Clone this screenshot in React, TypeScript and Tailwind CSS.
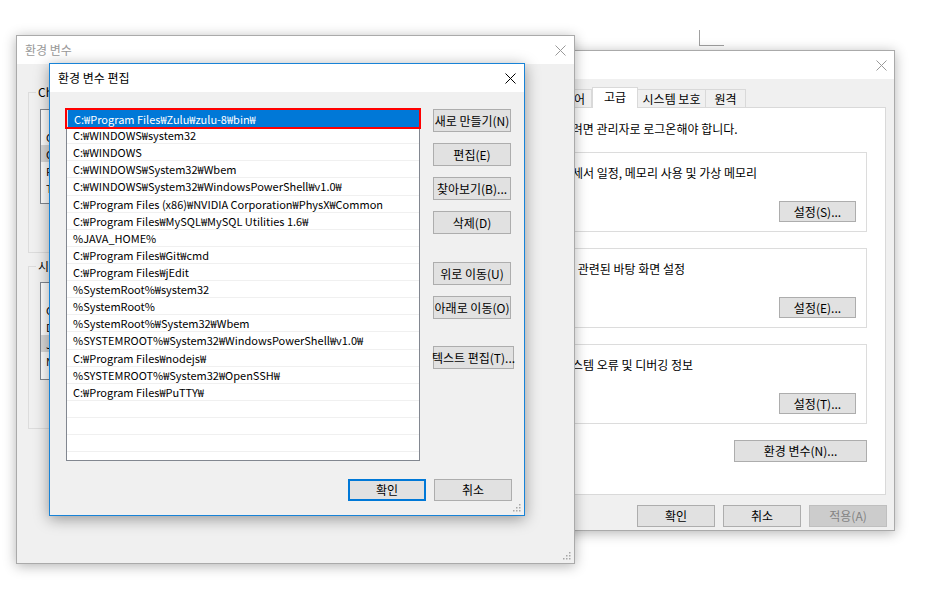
import React from "react";

const FONT = "font-['Noto_Sans_CJK_KR','Noto_Sans',sans-serif]";

const paths = [
  "C:₩Program Files₩Zulu₩zulu-8₩bin₩",
  "C:₩WINDOWS₩system32",
  "C:₩WINDOWS",
  "C:₩WINDOWS₩System32₩Wbem",
  "C:₩WINDOWS₩System32₩WindowsPowerShell₩v1.0₩",
  "C:₩Program Files (x86)₩NVIDIA Corporation₩PhysX₩Common",
  "C:₩Program Files₩MySQL₩MySQL Utilities 1.6₩",
  "%JAVA_HOME%",
  "C:₩Program Files₩Git₩cmd",
  "C:₩Program Files₩jEdit",
  "%SystemRoot%₩system32",
  "%SystemRoot%",
  "%SystemRoot%₩System32₩Wbem",
  "%SYSTEMROOT%₩System32₩WindowsPowerShell₩v1.0₩",
  "C:₩Program Files₩nodejs₩",
  "%SYSTEMROOT%₩System32₩OpenSSH₩",
  "C:₩Program Files₩PuTTY₩",
  "",
  "",
  "",
];

const CloseX = ({ color }: { color: string }) => (
  <svg width="11" height="11" viewBox="0 0 11 11">
    <path d="M0.5 0.5 L10.5 10.5 M10.5 0.5 L0.5 10.5" stroke={color} strokeWidth="1" />
  </svg>
);

// resize grip dots, bottom-right corner of a sizable window
const Grip = () => (
  <svg width="9" height="9" viewBox="0 0 9 9" className="absolute right-[3px] bottom-[3px]">
    {[
      [7, 1],
      [7, 4],
      [4, 4],
      [7, 7],
      [4, 7],
      [1, 7],
    ].map(([x, y], i) => (
      <rect key={i} x={x} y={y} width="1.5" height="1.5" fill="#a6a6a6" />
    ))}
  </svg>
);

type BtnProps = {
  label: string;
  w?: string;
  h?: string;
  primary?: boolean;
  disabled?: boolean;
  className?: string;
};

const Btn = ({ label, w = "w-[78px]", h = "h-[22px]", primary, disabled, className = "" }: BtnProps) => (
  <div
    className={`${w} ${h} ${className} flex shrink-0 items-center justify-center whitespace-nowrap text-[12px] leading-[16px] ${
      primary
        ? "border-2 border-[#0078d7] bg-[#e1e1e1] text-black"
        : disabled
        ? "border border-[#bfbfbf] bg-[#cccccc] text-[#838383]"
        : "border border-[#adadad] bg-[#e1e1e1] text-black"
    }`}
  >
    {label}
  </div>
);

const groups = [
  { title: "성능", desc: "시각 효과, 프로세서 일정, 메모리 사용 및 가상 메모리", btn: "설정(S)...", shift: "" },
  { title: "사용자 프로필", desc: "사용자 로그인에 관련된 바탕 화면 설정", btn: "설정(E)...", shift: "-ml-[2px]" },
  { title: "시작 및 복구", desc: "시스템 시작, 시스템 오류 및 디버깅 정보", btn: "설정(T)...", shift: "" },
];

const SystemProps = () => (
  <div className="absolute left-[455px] top-[50px] w-[440px] h-[481px] border border-[#aaaaaa] bg-[#f0f0f0] shadow-[0_2px_12px_rgba(0,0,0,0.3)] flex flex-col">
    <div className="h-[28px] bg-white flex items-center justify-between shrink-0">
      <span className="pl-[8px] text-[12px] text-[#999]">시스템 속성</span>
      <div className="w-[26px] flex justify-center">
        <CloseX color="#999" />
      </div>
    </div>
    <div className="flex flex-col pl-[9px] pr-[8px] pt-[7px]">
      <div className="flex items-end h-[21px]">
        <div className="w-[70px] h-[18px] border border-[#d9d9d9] border-b-0 flex items-center justify-center text-[12px]">컴퓨터 이름</div>
        <div className="w-[57px] h-[18px] border border-[#d9d9d9] border-b-0 border-l-0 flex items-center justify-center text-[12px]">하드웨어</div>
        <div className="w-[46px] h-[21px] border border-[#d9d9d9] border-b-0 bg-white flex items-center justify-center text-[12px] relative z-10 -mb-px pb-[3px]">고급</div>
        <div className="w-[68px] h-[18px] border border-[#d9d9d9] border-b-0 border-l-0 flex items-center justify-center text-[12px]">시스템 보호</div>
        <div className="w-[40px] h-[18px] border border-[#d9d9d9] border-b-0 border-l-0 flex items-center justify-center text-[12px]">원격</div>
      </div>
      <div className="h-[388px] border border-[#d9d9d9] bg-white flex flex-col pl-[20px] pr-[18px] pt-[13px]">
        <div className="ml-[3px] h-[16px] leading-[16px] text-[12px] whitespace-nowrap">이 내용을 변경하려면 관리자로 로그온해야 합니다.</div>
        {groups.map((g, i) => (
          <fieldset key={i} className={`${i === 0 ? "mt-[7px]" : "mt-[8px]"} border border-[#dcdcdc] pl-[10px] pr-[10px] pb-[9px] flex flex-col`}>
            <legend className="-ml-[4px] px-[2px] leading-[16px] text-[12px]">{g.title}</legend>
            <div className={`${g.shift} mt-[5px] h-[16px] leading-[16px] text-[12px] whitespace-nowrap`}>{g.desc}</div>
            <div className="mt-[20px] flex justify-end">
              <Btn label={g.btn} w="w-[77px]" h="h-[21px]" />
            </div>
          </fieldset>
        ))}
        <div className="mt-[16px] flex justify-end">
          <Btn label="환경 변수(N)..." w="w-[133px]" />
        </div>
      </div>
      <div className="mt-[10px] -mr-[1px] flex justify-end gap-[8px]">
        <Btn label="확인" />
        <Btn label="취소" />
        <Btn label="적용(A)" disabled />
      </div>
    </div>
  </div>
);

// list on the env-vars window; only its first few pixels show past the edit dialog
const MiniList = ({ rows, sel }: { rows: string[]; sel: number }) => (
  <div className="h-full bg-white border border-[#828790] flex flex-col pt-[18px]">
    {rows.map((r, i) => (
      <div key={i} className={`h-[17px] flex items-center pl-[5px] ${i === sel ? "bg-[#d9d9d9]" : ""}`}>
        <div className="w-[6px] overflow-hidden whitespace-nowrap text-[11px] leading-[14px]">{r}</div>
      </div>
    ))}
  </div>
);

const EnvVars = () => (
  <div className="absolute left-[16px] top-[35px] w-[559px] h-[529px] border border-[#aaaaaa] bg-[#f0f0f0] shadow-[0_2px_12px_rgba(0,0,0,0.3)] flex flex-col">
    <div className="h-[28px] bg-white flex items-center justify-between shrink-0">
      <span className="pl-[8px] text-[12px] text-[#999]">환경 변수</span>
      <div className="w-[28px] flex justify-center">
        <CloseX color="#999" />
      </div>
    </div>
    <div className="flex flex-col pl-[11px] pt-[20px]">
      <fieldset className="w-[487px] h-[169px] border border-[#dcdcdc] pl-[11px] pr-[11px] flex flex-col">
        <legend className="-ml-[4px] px-[2px] leading-[16px] text-[12px] whitespace-nowrap">
          <span className="block w-[12px] overflow-hidden">Charlie에 대한 사용자 변수(U)</span>
        </legend>
        <div className="mt-[9px] h-[95px]">
          <MiniList rows={["ChocolateyLastPathUpdate", "OneDrive", "Path", "TEMP"]} sel={1} />
        </div>
      </fieldset>
      <fieldset className="mt-[5px] w-[487px] h-[171px] border border-[#dcdcdc] pl-[11px] pr-[11px] flex flex-col">
        <legend className="-ml-[4px] px-[2px] leading-[16px] text-[12px] whitespace-nowrap">
          <span className="block w-[12px] overflow-hidden">시스템 변수(S)</span>
        </legend>
        <div className="mt-[8px] h-[98px]">
          <MiniList rows={["ComSpec", "DriverData", "JAVA_HOME", "NUMBER_OF_PROCESSORS"]} sel={2} />
        </div>
      </fieldset>
    </div>
    <Grip />
  </div>
);

const EditDialog = () => (
  <div className="absolute left-[49px] top-[63px] w-[476px] h-[453px] border border-[#1883d7] bg-[#f0f0f0] shadow-[0_3px_14px_rgba(0,0,0,0.38)] flex flex-col">
    <div className="h-[28px] bg-white flex items-center justify-between shrink-0">
      <span className="pl-[8px] text-[12px] text-black">환경 변수 편집</span>
      <div className="w-[28px] flex justify-center">
        <CloseX color="#000" />
      </div>
    </div>
    <div className="flex flex-col pl-[16px] pt-[17px]">
      <div className="flex">
        <div className="w-[354px] h-[352px] bg-white border border-[#828790] flex flex-col">
          {paths.map((p, i) => (
            <div
              key={i}
              className={`h-[17.12px] shrink-0 pl-[6px] flex items-center text-[11px] leading-[14px] whitespace-nowrap ${
                i === 0
                  ? "bg-[#0078d7] text-white outline-2 outline-[#ff0000] border-l border-[#cfe3f5]"
                  : "border-b border-[#f0f0f0] text-black"
              }`}
            >
              {p}
            </div>
          ))}
        </div>
        <div className="ml-[13px] flex flex-col items-start">
          <Btn label="새로 만들기(N)" h="h-[23px]" />
          <Btn label="편집(E)" h="h-[23px]" className="mt-[11px]" />
          <Btn label="찾아보기(B)..." h="h-[23px]" className="mt-[11px]" />
          <Btn label="삭제(D)" h="h-[23px]" className="mt-[11px]" />
          <Btn label="위로 이동(U)" h="h-[23px]" className="mt-[28px]" />
          <Btn label="아래로 이동(O)" h="h-[23px]" className="mt-[11px]" />
          <Btn label="텍스트 편집(T)..." w="w-[81px]" h="h-[23px]" className="mt-[27px]" />
        </div>
      </div>
      <div className="mt-[18px] flex justify-end gap-[8px] pr-[12px]">
        <Btn label="확인" primary />
        <Btn label="취소" />
      </div>
    </div>
    <Grip />
  </div>
);

export default function App() {
  return (
    <div className={`${FONT} relative w-[936px] h-[605px] overflow-hidden bg-white text-black`}>
      <div className="absolute left-[699px] top-[30px] w-[25px] h-[16px] border-l border-b border-[#a0a0a0]" />
      <SystemProps />
      <EnvVars />
      <EditDialog />
    </div>
  );
}
